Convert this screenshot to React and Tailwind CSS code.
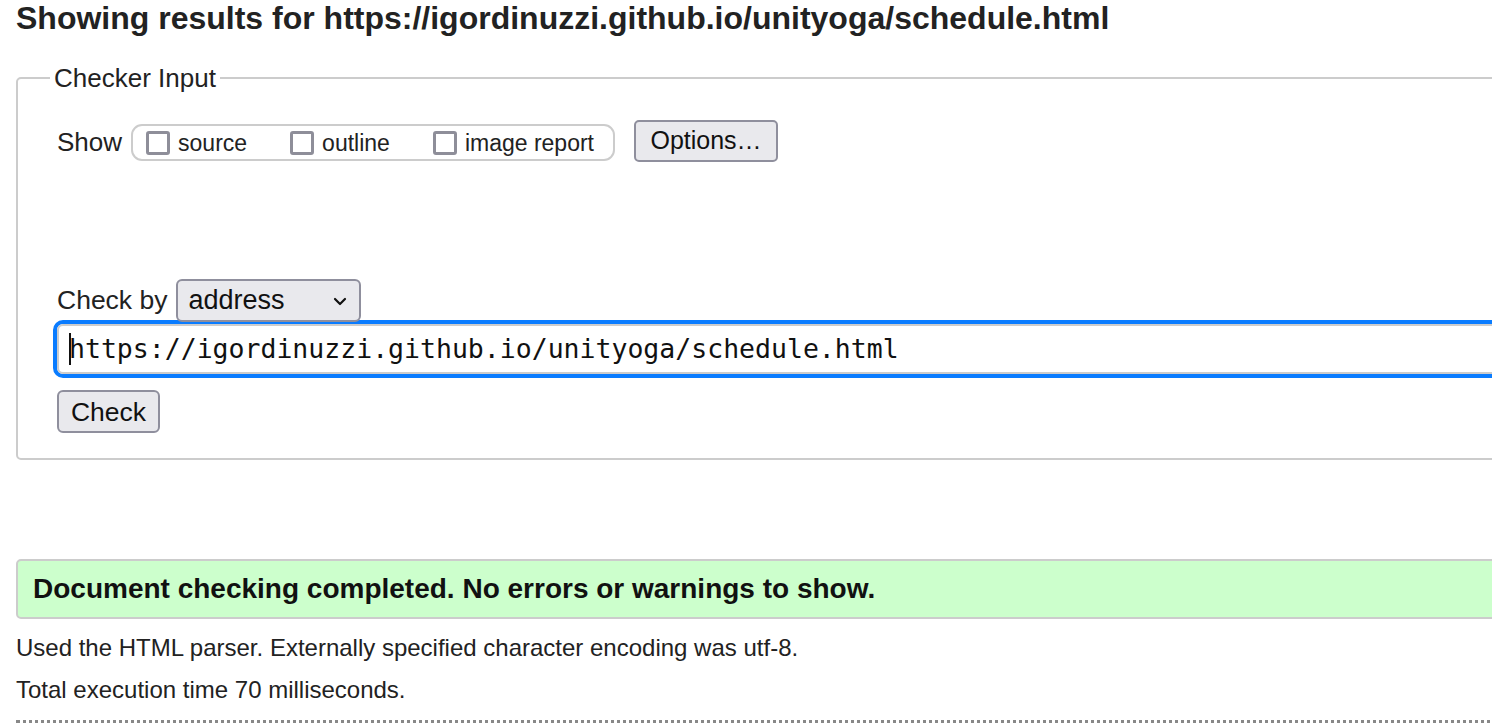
import React from 'react';

const sans = "font-['Liberation_Sans',Arial,sans-serif]";

function Box({ label }) {
  return (
    <label className="flex items-center gap-[8px]">
      <span className="w-[24px] h-[24px] border-[3px] border-[#8e8e99] rounded-[3px] bg-white" />
      <span className="text-[23px] text-[#222] leading-[26px]">{label}</span>
    </label>
  );
}

export default function App() {
  return (
    <div className={`w-[1492px] h-[724px] overflow-hidden bg-white text-[#111] ${sans}`}>
      <div className="w-[1540px] pl-[16px]">
        <h1 className="text-[32px] font-bold text-[#222] leading-[36px]">
          Showing results for https://igordinuzzi.github.io/unityoga/schedule.html
        </h1>

        <fieldset className="mt-[27px] border-2 border-[#ccc] rounded-[5px] h-[397px]">
          <legend className="ml-[32px] px-[4px] text-[26px] text-[#222] leading-[30px]">Checker Input</legend>

          <div className="pl-[39px]">
            {/* show options */}
            <div className="flex items-center mt-[30px]">
              <span className="text-[26px] text-[#222] mr-[9px]">Show</span>
              <div className="flex items-center h-[37px] w-[484px] border-2 border-[#ccc] rounded-[11px] pl-[13px] gap-[43px]">
                <Box label="source" />
                <Box label="outline" />
                <Box label="image report" />
              </div>
              <button className="ml-[19px] h-[42px] w-[144px] bg-[#e9e9ed] border-2 border-[#8f8f9d] rounded-[5px] text-[25px] text-[#111] -mt-[3px]">
                Options…
              </button>
            </div>

            {/* check by */}
            <div className="flex items-center mt-[118px]">
              <span className="text-[26.5px] text-[#222] mr-[9px]">Check by</span>
              <div className="flex items-center justify-between w-[185px] h-[43px] bg-[#e9e9ed] border-2 border-[#8f8f9d] rounded-[6px] pl-[10px] pr-[12px] -mt-[1px]">
                <span className="text-[27px] text-[#111]">address</span>
                <svg width="14" height="10" viewBox="0 0 14 10" fill="none" stroke="#111" strokeWidth="2.2" strokeLinecap="round" strokeLinejoin="round">
                  <path d="M2 3 L7 8 L12 3" />
                </svg>
              </div>
            </div>

            {/* url input */}
            <div className="-mt-[2px] -ml-[4px] h-[58px] border-[4px] border-[#0a7cff] rounded-[10px] bg-white">
              <div className="h-full border-2 border-[#ccc] rounded-[6px] flex items-center pl-[10px]">
                <span className="w-[2px] h-[32px] bg-[#111] -mr-[2px]" />
                <span className="font-['DejaVu_Sans_Mono',monospace] text-[26.5px] text-[#111]">
                  https://igordinuzzi.github.io/unityoga/schedule.html
                </span>
              </div>
            </div>

            <button className="mt-[12px] h-[43px] w-[103px] bg-[#e9e9ed] border-2 border-[#8f8f9d] rounded-[6px] text-[26.5px] text-[#111] leading-[30px]">
              Check
            </button>
          </div>
        </fieldset>

        <div className="mt-[99px] h-[60px] bg-[#ccffcc] border-2 border-[#ccc] rounded-l-[5px] flex items-center pl-[15px]">
          <span className="text-[28px] font-bold text-[#111]">
            Document checking completed. No errors or warnings to show.
          </span>
        </div>

        <p className="mt-[15px] text-[24px] text-[#222] leading-[28px]">
          Used the HTML parser. Externally specified character encoding was utf-8.
        </p>
        <p className="mt-[14px] text-[24px] text-[#222] leading-[28px]">Total execution time 70 milliseconds.</p>
        <div className="mt-[16px] border-t-[3px] border-dotted border-[#888]" />
      </div>
    </div>
  );
}
